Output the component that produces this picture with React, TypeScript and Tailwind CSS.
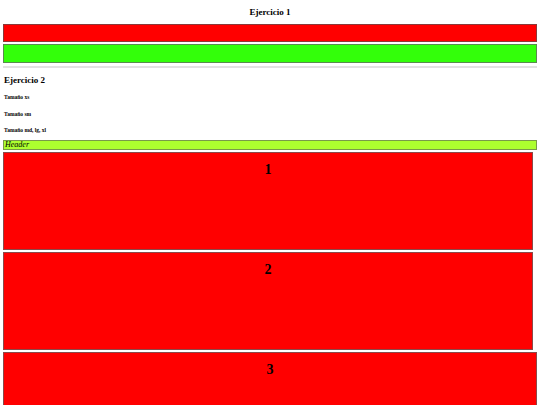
export default function App() {
  const boxes = [
    { n: "1", w: "mr-[7px]" },
    { n: "2", w: "mr-[7px]" },
    { n: "3", w: "mr-[3px]" },
  ];
  return (
    <div className="w-[540px] h-[405px] overflow-hidden bg-white font-['Liberation_Serif',serif] text-black">
      <div className="pt-[7px] text-center text-[9px] font-bold leading-[11px]">Ejercicio 1</div>
      <div className="mx-[3px] mt-[6px] h-[18px] bg-[#ff0000] border border-[#8a3a3a]" />
      <div className="mx-[3px] mt-[2px] h-[19px] bg-[#33ff0a] border border-[#5a8a50]" />
      <div className="mx-[3px] mt-[3px] h-[2px] bg-[#e2e2e2]" />
      <div className="mt-[7px] ml-[4px] text-[9px] font-bold leading-[11px]">Ejercicio 2</div>
      <div className="mt-[8px] ml-[4px] text-[5.5px] font-bold leading-[6px]">Tamaño xs</div>
      <div className="mt-[11px] ml-[4px] text-[5.5px] font-bold leading-[6px]">Tamaño sm</div>
      <div className="mt-[10px] ml-[4px] text-[5.5px] font-bold leading-[6px]">Tamaño md, lg, xl</div>
      <div className="mx-[3px] mt-[7px] h-[10px] bg-[#adff2f] border border-[#7a9a4a] italic text-[8px] leading-[8px] pl-px">
        Header
      </div>
      <div className="flex flex-col gap-[2px] mt-[2px]">
        {boxes.map((b) => (
          <div
            key={b.n}
            className={`ml-[3px] ${b.w} h-[98px] bg-[#ff0000] border border-[#8a4a4a] text-center text-[14px] font-bold leading-[14px] pt-[10px]`}
          >
            {b.n}
          </div>
        ))}
      </div>
    </div>
  );
}
